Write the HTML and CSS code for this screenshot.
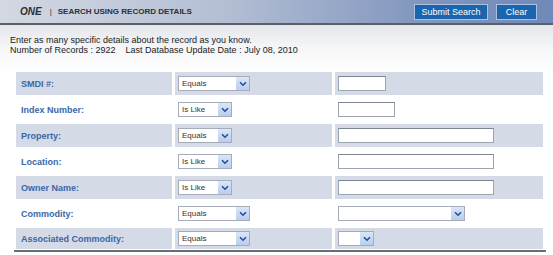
FILE: index.html
```html
<!DOCTYPE html>
<html>
  <head>
    <title>Search Using Record Details</title>
    <link rel="stylesheet" href="styles.css">
  </head>
  <body>
    <div class="topbar">
      <div class="crumb">
        <span class="brand">ONE</span>
        <span class="sep">|</span>
        <span class="title">SEARCH USING RECORD DETAILS</span>
      </div>
      <div class="actions">
        <button class="btn submit">Submit Search</button>
        <button class="btn clear">Clear</button>
      </div>
    </div>

    <div class="intro">
      <p>Enter as many specific details about the record as you know.</p>
      <p>Number of Records : 2922 &nbsp;&nbsp; Last Database Update Date : July 08, 2010</p>
    </div>

    <div class="search-grid">
      <div class="cell label shaded">SMDI #:</div>
      <div class="cell shaded"><div class="dd w72"><span>Equals</span><i class="arr"><svg viewBox="0 0 8 6" width="8" height="6"><path d="M1 1.2 L4 4.2 L7 1.2" fill="none" stroke="#1f4f9a" stroke-width="1.6"/></svg></i></div></div>
      <div class="cell shaded"><input class="txt w48" type="text"></div>

      <div class="cell label">Index Number:</div>
      <div class="cell"><div class="dd w54"><span>Is Like</span><i class="arr"><svg viewBox="0 0 8 6" width="8" height="6"><path d="M1 1.2 L4 4.2 L7 1.2" fill="none" stroke="#1f4f9a" stroke-width="1.6"/></svg></i></div></div>
      <div class="cell"><input class="txt w57" type="text"></div>

      <div class="cell label shaded">Property:</div>
      <div class="cell shaded"><div class="dd w54"><span>Equals</span><i class="arr"><svg viewBox="0 0 8 6" width="8" height="6"><path d="M1 1.2 L4 4.2 L7 1.2" fill="none" stroke="#1f4f9a" stroke-width="1.6"/></svg></i></div></div>
      <div class="cell shaded"><input class="txt w156" type="text"></div>

      <div class="cell label">Location:</div>
      <div class="cell"><div class="dd w54"><span>Is Like</span><i class="arr"><svg viewBox="0 0 8 6" width="8" height="6"><path d="M1 1.2 L4 4.2 L7 1.2" fill="none" stroke="#1f4f9a" stroke-width="1.6"/></svg></i></div></div>
      <div class="cell"><input class="txt w156" type="text"></div>

      <div class="cell label shaded">Owner Name:</div>
      <div class="cell shaded"><div class="dd w54"><span>Is Like</span><i class="arr"><svg viewBox="0 0 8 6" width="8" height="6"><path d="M1 1.2 L4 4.2 L7 1.2" fill="none" stroke="#1f4f9a" stroke-width="1.6"/></svg></i></div></div>
      <div class="cell shaded"><input class="txt w156" type="text"></div>

      <div class="cell label">Commodity:</div>
      <div class="cell"><div class="dd w72"><span>Equals</span><i class="arr"><svg viewBox="0 0 8 6" width="8" height="6"><path d="M1 1.2 L4 4.2 L7 1.2" fill="none" stroke="#1f4f9a" stroke-width="1.6"/></svg></i></div></div>
      <div class="cell"><div class="dd w127"><span></span><i class="arr"><svg viewBox="0 0 8 6" width="8" height="6"><path d="M1 1.2 L4 4.2 L7 1.2" fill="none" stroke="#1f4f9a" stroke-width="1.6"/></svg></i></div></div>

      <div class="cell label shaded">Associated Commodity:</div>
      <div class="cell shaded"><div class="dd w72"><span>Equals</span><i class="arr"><svg viewBox="0 0 8 6" width="8" height="6"><path d="M1 1.2 L4 4.2 L7 1.2" fill="none" stroke="#1f4f9a" stroke-width="1.6"/></svg></i></div></div>
      <div class="cell shaded"><div class="dd w36"><span></span><i class="arr"><svg viewBox="0 0 8 6" width="8" height="6"><path d="M1 1.2 L4 4.2 L7 1.2" fill="none" stroke="#1f4f9a" stroke-width="1.6"/></svg></i></div></div>
    </div>
    <div class="rule"></div>
  </body>
</html>
```

FILE: styles.css
```css
body {
  margin: 0;
  font-family: "Liberation Sans", Arial, sans-serif;
  background: #fff;
  color: #222;
}

.topbar {
  display: flex;
  align-items: center;
  justify-content: space-between;
  height: 23px;
  padding: 0 16px 0 20px;
  background: linear-gradient(to right, #d3d8e2 0%, #b4bfd4 40%, #8397bf 75%, #7089b8 100%);
  border-bottom: 2px solid #5a5f68;
}

.crumb {
  display: flex;
  align-items: center;
  color: #2b2f38;
}

.brand {
  font-weight: bold;
  font-style: italic;
  font-size: 10px;
}

.sep {
  font-size: 8px;
  margin: 0 6px 0 8px;
}

.title {
  font-weight: bold;
  font-size: 8px;
}

.actions {
  display: flex;
  gap: 8px;
  padding-top: 1px;
}

.btn {
  height: 16px;
  padding: 0;
  border: 1px solid #a9c2e2;
  background: #1b64ae;
  color: #fff;
  font-family: "Liberation Sans", Arial, sans-serif;
  font-size: 9px;
}

.submit {
  width: 74px;
}

.clear {
  width: 41px;
}

.intro {
  height: 47px;
  padding: 10px 10px 0 10px;
  box-sizing: border-box;
  background: linear-gradient(to bottom, #e4e6ea 0%, #f4f5f7 45%, #fff 100%);
  font-size: 9px;
  line-height: 10px;
}

.intro p {
  margin: 0;
}

.search-grid {
  display: grid;
  grid-template-columns: 156px 157px 208px;
  grid-template-rows: repeat(6, 23px) 21px;
  column-gap: 3px;
  row-gap: 3px;
  margin: 0 0 0 16px;
}

.cell {
  display: flex;
  align-items: center;
  padding-left: 3px;
}

.cell.label {
  padding-left: 5px;
  font-size: 9px;
  font-weight: bold;
  color: #3a67a6;
}

.shaded {
  background: #d4dae6;
}

.dd {
  display: flex;
  align-items: center;
  height: 15px;
  box-sizing: border-box;
  border: 1px solid #a6adb8;
  background: #fff;
  font-size: 8px;
  color: #333;
}

.dd span {
  flex: 1;
  padding-left: 3px;
}

.arr {
  display: flex;
  align-items: center;
  justify-content: center;
  width: 13px;
  height: 13px;
  background: linear-gradient(to bottom, #dbe6f7, #b9cdee);
  border-left: 1px solid #fff;
}

.w72 { width: 72px; }
.w54 { width: 54px; }
.w127 { width: 127px; }
.w36 { width: 36px; }

.txt {
  height: 15px;
  box-sizing: border-box;
  margin: 0;
  border: 1px solid #9ca4ae;
  border-top-color: #7d8590;
  background: #fff;
  padding: 0 2px;
}

.w48 { width: 48px; }
.w57 { width: 57px; }
.w156 { width: 156px; }

.rule {
  margin: 1px 7px 0 14px;
  height: 2px;
  background: #6a6d72;
}
```
